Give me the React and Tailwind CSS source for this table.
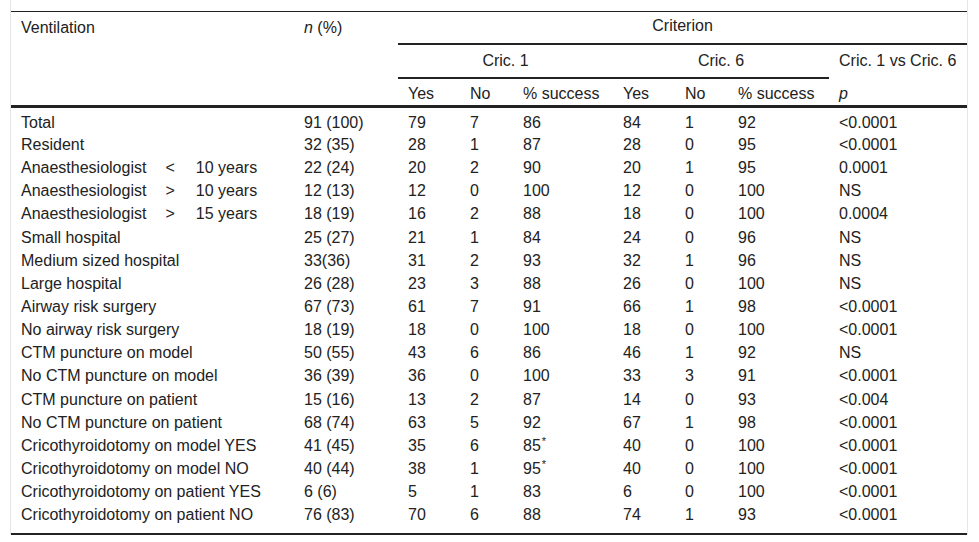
import React from "react";

const rows = [
  ["Total", "91 (100)", "79", "7", "86", "84", "1", "92", "<0.0001"],
  ["Resident", "32 (35)", "28", "1", "87", "28", "0", "95", "<0.0001"],
  [["<", "10 years"], "22 (24)", "20", "2", "90", "20", "1", "95", "0.0001"],
  [[">", "10 years"], "12 (13)", "12", "0", "100", "12", "0", "100", "NS"],
  [[">", "15 years"], "18 (19)", "16", "2", "88", "18", "0", "100", "0.0004"],
  ["Small hospital", "25 (27)", "21", "1", "84", "24", "0", "96", "NS"],
  ["Medium sized hospital", "33(36)", "31", "2", "93", "32", "1", "96", "NS"],
  ["Large hospital", "26 (28)", "23", "3", "88", "26", "0", "100", "NS"],
  ["Airway risk surgery", "67 (73)", "61", "7", "91", "66", "1", "98", "<0.0001"],
  ["No airway risk surgery", "18 (19)", "18", "0", "100", "18", "0", "100", "<0.0001"],
  ["CTM puncture on model", "50 (55)", "43", "6", "86", "46", "1", "92", "NS"],
  ["No CTM puncture on model", "36 (39)", "36", "0", "100", "33", "3", "91", "<0.0001"],
  ["CTM puncture on patient", "15 (16)", "13", "2", "87", "14", "0", "93", "<0.004"],
  ["No CTM puncture on patient", "68 (74)", "63", "5", "92", "67", "1", "98", "<0.0001"],
  ["Cricothyroidotomy on model YES", "41 (45)", "35", "6", "85*", "40", "0", "100", "<0.0001"],
  ["Cricothyroidotomy on model NO", "40 (44)", "38", "1", "95*", "40", "0", "100", "<0.0001"],
  ["Cricothyroidotomy on patient YES", "6 (6)", "5", "1", "83", "6", "0", "100", "<0.0001"],
  ["Cricothyroidotomy on patient NO", "76 (83)", "70", "6", "88", "74", "1", "93", "<0.0001"],
];

const widths = ["w-[283px]", "w-[104px]", "w-[62px]", "w-[53px]", "w-[100px]", "w-[62px]", "w-[53px]", "w-[101px]", "w-[138px]"];

function Label({ value }) {
  if (Array.isArray(value)) {
    return (
      <span>
        Anaesthesiologist
        <span className="inline-block ml-[19px]">{value[0]}</span>
        <span className="inline-block ml-[21px]">{value[1]}</span>
      </span>
    );
  }
  return value;
}

function Value({ value }) {
  if (value.endsWith("*")) {
    return (
      <span>
        {value.slice(0, -1)}
        <span className="inline-block align-top text-[11px] leading-[11px] -mt-[1px] ml-[1px]">*</span>
      </span>
    );
  }
  return value;
}

export default function App() {
  return (
    <div className="bg-white w-[979px] h-[542px] pl-[10px] text-[#222]" style={{ fontFamily: '"Liberation Sans", Arial, sans-serif' }}>
      <div className="w-[958px] border-x border-[#e6e6e6] pt-[11px]">
        <table className="table-fixed border-collapse w-[956px] text-[16px] leading-[18px]">
          <colgroup>
            {widths.map((w, i) => (
              <col key={i} className={w} />
            ))}
          </colgroup>
          <thead>
            <tr className="h-[32px] border-t border-[#222]">
              <th rowSpan={3} className="font-normal text-left align-top pl-[10px] pt-[7px]">Ventilation</th>
              <th rowSpan={3} className="font-normal text-left align-top pl-[10px] pt-[7px]">
                <i>n</i> (%)
              </th>
              <th colSpan={7} className="font-normal text-center border-b-2 border-[#222] pb-[2px]">
                Criterion
              </th>
            </tr>
            <tr className="h-[34px]">
              <th colSpan={3} className="font-normal text-center border-b-2 border-[#222]">Cric. 1</th>
              <th colSpan={3} className="font-normal text-center border-b-2 border-[#222]">Cric. 6</th>
              <th className="font-normal text-left pl-[10px]">Cric. 1 vs Cric. 6</th>
            </tr>
            <tr className="h-[29px] border-b-[3px] border-[#222]">
              {["Yes", "No", "% success", "Yes", "No", "% success"].map((t, i) => (
                <th key={i} className="font-normal text-left pl-[10px] pt-[5px]">{t}</th>
              ))}
              <th className="font-normal text-left pl-[10px] pt-[5px]">
                <i>p</i>
              </th>
            </tr>
          </thead>
          <tbody className="border-b-2 border-[#222]">
            {rows.map((r, ri) => (
              <tr key={ri} className={ri === 0 ? "h-[27px]" : ri === rows.length - 1 ? "h-[30px]" : "h-[23.15px]"}>
                {r.map((c, ci) => (
                  <td
                    key={ci}
                    className={`pl-[10px] align-middle whitespace-nowrap ${ri === 0 ? "pt-[4px]" : ""} ${ri === rows.length - 1 ? "pb-[7px]" : ""}`}
                  >
                    {ci === 0 ? <Label value={c} /> : <Value value={c} />}
                  </td>
                ))}
              </tr>
            ))}
          </tbody>
        </table>
      </div>
    </div>
  );
}
